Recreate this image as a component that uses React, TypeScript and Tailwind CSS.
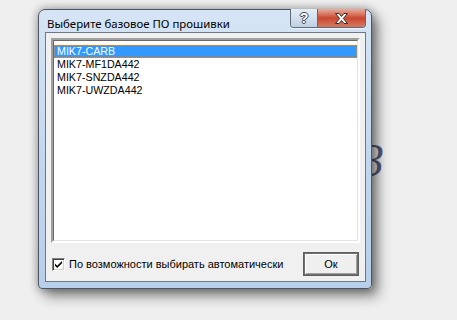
import { useState } from "react";

const items = ["MIK7-CARB", "MIK7-MF1DA442", "MIK7-SNZDA442", "MIK7-UWZDA442"];

export default function App() {
  const [sel, setSel] = useState(0);
  const [auto, setAuto] = useState(true);

  return (
    <div className="relative h-[320px] w-[457px] overflow-hidden bg-[#efefef] pt-[9px] pl-[38px]">
      {/* background text peeking out from behind the dialog */}
      <span className="absolute left-[361px] top-[138px] font-['Liberation_Serif',serif] text-[46px] italic leading-none text-[#55597a]">
        3
      </span>

      <div className="relative z-10 flex h-[280px] w-[334px] flex-col rounded-t-[7px] rounded-b-[4px] border border-[#4c5664] bg-gradient-to-b from-[#d6e5f5] via-[#c3d8ef] to-[#b7cfea] pl-[6px] pr-[5px] pb-[6px] shadow-[0_0_9px_1px_rgba(0,0,0,0.3),6px_7px_13px_rgba(0,0,0,0.45)]">
        {/* title bar */}
        <div className="flex h-[22px] items-start justify-between">
          <span className="pt-[7px] pl-[2px] font-['Noto_Sans',sans-serif] text-[11.4px] leading-[14px] text-black">
            Выберите базовое ПО прошивки
          </span>
          <div className="-mt-[1px] flex h-[19px] rounded-b-[4px] border border-t-0 border-[#5d6a7a] shadow-[0_1px_0_rgba(255,255,255,0.6)]">
            <button
              type="button"
              className="flex w-[27px] items-center justify-center rounded-bl-[3px] border-r border-[#5d6a7a] bg-gradient-to-b from-[#e4edf7] via-[#d3e0ef] to-[#bfd0e4] font-['Liberation_Sans',sans-serif] text-[14px] font-bold leading-none text-white [text-shadow:1px_0_#3b4656,-1px_0_#3b4656,0_1px_#3b4656,0_-1px_#3b4656]"
            >
              ?
            </button>
            <button
              type="button"
              className="flex w-[47px] items-center justify-center rounded-br-[3px] bg-gradient-to-b from-[#e6ad9f] via-[#c9472f] to-[#d7775e]"
            >
              <svg width="15" height="11" viewBox="0 0 15 11">
                <path
                  d="M1.5 0.5h3.5l2.5 3 2.5-3h3.5l-4.2 5 4.2 5h-3.5l-2.5-3-2.5 3h-3.5l4.2-5z"
                  fill="#ffffff"
                  stroke="#3d2a2a"
                  strokeWidth="1"
                  strokeLinejoin="round"
                />
              </svg>
            </button>
          </div>
        </div>

        {/* client area */}
        <div className="flex flex-1 flex-col border border-[#6b7888] bg-[#f0f0f0] p-[5px] font-['Liberation_Sans',Arial,sans-serif] text-[11px] text-black">
          <div className="h-[205px] border-2 border-t-[#a0a0a0] border-l-[#a0a0a0] border-b-[#ffffff] border-r-[#ffffff] bg-white">
            <div className="h-full border border-t-[#696969] border-l-[#696969] border-b-[#e3e3e3] border-r-[#e3e3e3] pt-[4px] text-[10.7px]">
              {items.map((it, i) => (
                <div
                  key={it}
                  onClick={() => setSel(i)}
                  className={
                    i === sel
                      ? "h-[13px] border border-dotted border-[#d98a3c] bg-[#3399ff] pl-[2px] leading-[11px] text-white"
                      : "h-[13px] pl-[3px] leading-[13px]"
                  }
                >
                  {it}
                </div>
              ))}
            </div>
          </div>

          <div className="mt-[9px] flex h-[24px] items-center justify-between">
            <label className="flex items-center gap-[4px] pl-[1px]" onClick={() => setAuto(!auto)}>
              <span className="flex h-[13px] w-[13px] items-center justify-center border border-t-[#808080] border-l-[#808080] border-b-[#ffffff] border-r-[#ffffff] bg-white shadow-[inset_1px_1px_0_#404040,inset_-1px_-1px_0_#d4d0c8]">
                {auto && (
                  <svg width="9" height="9" viewBox="0 0 9 9">
                    <path d="M1 3.5l2.2 2.3L8 1v2.3L3.2 8 1 5.7z" fill="#000" />
                  </svg>
                )}
              </span>
              <span>По возможности выбирать автоматически</span>
            </label>

            <button
              type="button"
              className="mr-[1px] h-[24px] w-[56px] border border-[#5f5f5f] bg-[#efefef] shadow-[inset_1px_1px_0_#6e6e6e,inset_-1px_-1px_0_#6e6e6e,inset_2px_2px_0_#ffffff,inset_-2px_-2px_0_#a0a0a0] text-[11px]"
            >
              Ок
            </button>
          </div>
        </div>
      </div>
    </div>
  );
}
